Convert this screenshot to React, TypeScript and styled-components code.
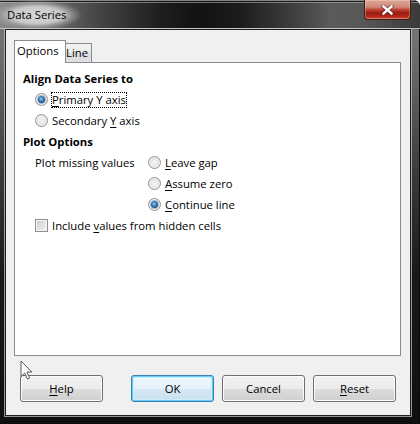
import React from "react";
import styled, { createGlobalStyle } from "styled-components";

const Global = createGlobalStyle`
  html, body { margin: 0; padding: 0; background: #ffffff; }
  body {
    font-family: "Open Sans", "Noto Sans", "Liberation Sans", sans-serif;
    font-size: 11.3px;
    color: #000;
  }
  #root { width: 420px; height: 424px; overflow: hidden; }
`;

const Window = styled.div`
  position: relative;
  width: 420px;
  height: 424px;
  box-sizing: border-box;
  display: flex;
  flex-direction: column;
  overflow: hidden;
  border-top-right-radius: 7px;
  background: linear-gradient(
    to bottom,
    #7c7c7c 0px,
    #686868 70px,
    #3c3c3c 170px,
    #1a1a1a 270px,
    #0f0f0f 100%
  );
  box-shadow: inset -1px 0 0 #0a0a0a, inset 0 -1px 0 #0a0a0a;
`;

const TitleBar = styled.div`
  flex: none;
  height: 29px;
  display: flex;
  justify-content: space-between;
  align-items: flex-start;
  padding-right: 9px;
  background:
    linear-gradient(to bottom, rgba(140, 140, 140, 0.9) 0 1px, rgba(25, 25, 25, 0.9) 1px 2px, rgba(185, 185, 185, 0.55) 2px 3px, transparent 3px),
    linear-gradient(to top, rgba(200, 200, 200, 0.85) 0 1px, transparent 1px),
    linear-gradient(
      to right,
      #8a8a8a 0px,
      #6a6a6a 50px,
      #444444 100px,
      #1e1e1e 160px,
      #121212 200px,
      #1c1c1c 240px,
      #3c3c3c 290px,
      #5a5a5a 330px,
      #585858 362px,
      #3a3a3a 420px
    );
`;

const Title = styled.div`
  height: 29px;
  line-height: 30px;
  padding: 0 16px 0 7px;
  margin-left: -4px;
  padding-left: 11px;
  white-space: nowrap;
  color: #000;
  background: radial-gradient(
    ellipse farthest-side at 48% 52%,
    rgba(214, 214, 214, 1) 0%,
    rgba(206, 206, 206, 0.95) 55%,
    rgba(170, 170, 170, 0.5) 80%,
    rgba(140, 140, 140, 0) 100%
  );
`;

const CloseButton = styled.div`
  width: 47px;
  height: 20px;
  box-sizing: border-box;
  border: 1px solid #3a1c16;
  border-top: none;
  border-radius: 0 0 4px 4px;
  display: flex;
  align-items: center;
  justify-content: center;
  background: linear-gradient(
    to bottom,
    #dca89b 0%,
    #d08576 38%,
    #bf4636 50%,
    #9c1d11 68%,
    #b42a1a 88%,
    #d0503a 100%
  );
  box-shadow: inset 0 0 0 1px rgba(255, 220, 210, 0.35);
`;

const Client = styled.div`
  flex: 1;
  margin: 0 9px 8px 5px;
  background: #f0f0f0;
  border: 1px solid #1c1c1c;
  box-shadow: 0 0 0 1px rgba(205, 205, 205, 0.7);
  display: flex;
  flex-direction: column;
  padding: 10px 9px 13px 8px;
  min-height: 0;
`;

const TabRow = styled.div`
  flex: none;
  height: 22px;
  display: flex;
  align-items: flex-start;
`;

const Tab = styled.div<{ $active?: boolean }>`
  position: relative;
  box-sizing: border-box;
  border: 1px solid #898c95;
  border-bottom: none;
  white-space: nowrap;
  ${(p) =>
    p.$active
      ? `
    z-index: 2;
    width: 52px;
    height: 23px;
    line-height: 20px;
    padding-left: 2px;
    background: #ffffff;
  `
      : `
    z-index: 1;
    width: 27px;
    height: 19px;
    margin-top: 3px;
    margin-left: -1px;
    line-height: 18px;
    padding-left: 0px;
    background: linear-gradient(to bottom, #f3f3f3 0%, #ebebeb 45%, #dddddd 55%, #e0e0e0 100%);
  `}
`;

const Panel = styled.div`
  flex: 1;
  min-height: 0;
  box-sizing: border-box;
  background: #ffffff;
  border: 1px solid #898c95;
  padding: 5px 8px;
  display: flex;
  flex-direction: column;
`;

const Heading = styled.div`
  height: 21px;
  line-height: 21px;
  font-weight: 700;
`;

const OptionRow = styled.div`
  height: 21px;
  display: flex;
  align-items: center;
  margin-left: 12px;
`;

const RadioCircle = styled.span<{ $checked?: boolean }>`
  flex: none;
  width: 13px;
  height: 13px;
  box-sizing: border-box;
  border-radius: 50%;
  border: 1px solid #929292;
  background: radial-gradient(circle at 50% 50%, #f6f6f6 0%, #e6e6e6 50%, #cfcfcf 100%);
  box-shadow: inset 0 0 0 1px rgba(255, 255, 255, 0.55);
  display: flex;
  align-items: center;
  justify-content: center;
  &::after {
    content: "";
    display: ${(p) => (p.$checked ? "block" : "none")};
    width: 7px;
    height: 7px;
    border-radius: 50%;
    background: radial-gradient(circle at 45% 42%, #9fd3ef 0%, #3f86bd 35%, #1c4f85 70%, #12365e 100%);
    box-shadow: 0 0 0 1px rgba(60, 120, 170, 0.4);
  }
`;

const CheckBox = styled.span`
  flex: none;
  width: 13px;
  height: 13px;
  box-sizing: border-box;
  border: 1px solid #8e8f8f;
  background: linear-gradient(135deg, #c4c6c9 0%, #dfe0e1 50%, #f4f4f4 100%);
  box-shadow: inset 0 0 0 1px #f6f6f6;
`;

const Label = styled.span<{ $focused?: boolean }>`
  margin-left: 3px;
  line-height: 14px;
  white-space: nowrap;
  border: 1px dotted ${(p) => (p.$focused ? "#000" : "transparent")};
  u {
    text-decoration-thickness: 1px;
    text-underline-offset: 2px;
  }
`;

const MissingGrid = styled.div`
  display: grid;
  grid-template-columns: 113px auto;
  grid-auto-rows: 21px;
  align-items: center;
  margin-left: 12px;
`;

const GridLabel = styled.span`
  grid-column: 1;
  grid-row: 1;
  white-space: nowrap;
`;

const GridOption = styled.div`
  grid-column: 2;
  display: flex;
  align-items: center;
`;

const ButtonRow = styled.div`
  flex: none;
  margin-top: 19px;
  height: 27px;
  display: flex;
  justify-content: space-between;
  padding: 0 5px 0 6px;
`;

const ButtonGroup = styled.div`
  display: flex;
  gap: 8px;
`;

const Button = styled.div<{ $default?: boolean }>`
  width: 83px;
  height: 27px;
  box-sizing: border-box;
  border-radius: 3px;
  display: flex;
  align-items: center;
  justify-content: center;
  color: #000;
  u {
    text-decoration-thickness: 1px;
    text-underline-offset: 2px;
  }
  ${(p) =>
    p.$default
      ? `
    border: 1px solid #3c7fb1;
    background: linear-gradient(to bottom, #eef7fc 0%, #e6f2fa 50%, #d6e8f4 51%, #c9e0ee 100%);
    box-shadow: inset 0 0 0 1px #5fd0f3, inset 0 0 0 2px #c8eefb;
  `
      : `
    border: 1px solid #707070;
    background: linear-gradient(to bottom, #f2f2f2 0%, #ebebeb 50%, #dddddd 51%, #cfcfcf 100%);
    box-shadow: inset 0 0 0 1px #fbfbfb;
  `}
`;

const Cursor = styled.svg`
  position: absolute;
  left: 20px;
  top: 360px;
  z-index: 5;
  pointer-events: none;
`;

export default function App() {
  return (
    <>
      <Global />
      <Window>
        <TitleBar>
          <Title>Data Series</Title>
          <CloseButton>
            <svg width="13" height="10" viewBox="0 0 13 10">
              <path d="M2.5 1.5 L10.5 8.5 M10.5 1.5 L2.5 8.5" stroke="#3a1410" strokeWidth="4.2" strokeLinecap="square" fill="none" opacity="0.55" />
              <path d="M2.5 1.5 L10.5 8.5 M10.5 1.5 L2.5 8.5" stroke="#ffffff" strokeWidth="2.4" strokeLinecap="square" fill="none" />
            </svg>
          </CloseButton>
        </TitleBar>
        <Client>
          <TabRow>
            <Tab $active>Options</Tab>
            <Tab>Line</Tab>
          </TabRow>
          <Panel>
            <Heading>Align Data Series to</Heading>
            <OptionRow>
              <RadioCircle $checked />
              <Label $focused>
                <u>P</u>rimary Y axis
              </Label>
            </OptionRow>
            <OptionRow>
              <RadioCircle />
              <Label>
                Secondary <u>Y</u> axis
              </Label>
            </OptionRow>
            <Heading>Plot Options</Heading>
            <MissingGrid>
              <GridLabel>Plot missing values</GridLabel>
              <GridOption>
                <RadioCircle />
                <Label>
                  <u>L</u>eave gap
                </Label>
              </GridOption>
              <GridOption>
                <RadioCircle />
                <Label>
                  <u>A</u>ssume zero
                </Label>
              </GridOption>
              <GridOption>
                <RadioCircle $checked />
                <Label>
                  <u>C</u>ontinue line
                </Label>
              </GridOption>
            </MissingGrid>
            <OptionRow>
              <CheckBox />
              <Label>
                Include <u>v</u>alues from hidden cells
              </Label>
            </OptionRow>
          </Panel>
          <ButtonRow>
            <Button>
              <span>
                <u>H</u>elp
              </span>
            </Button>
            <ButtonGroup>
              <Button $default>OK</Button>
              <Button>Cancel</Button>
              <Button>
                <span>
                  <u>R</u>eset
                </span>
              </Button>
            </ButtonGroup>
          </ButtonRow>
        </Client>
        <Cursor width="14" height="21" viewBox="0 0 14 21">
          <path
            d="M1 1 L1 16.5 L4.6 13 L7.4 19 L9.6 18 L6.9 12 L11.8 12 Z"
            fill="#ffffff"
            fillOpacity="0.9"
            stroke="#2a2a2a"
            strokeOpacity="0.75"
            strokeWidth="1"
            strokeLinejoin="miter"
          />
        </Cursor>
      </Window>
    </>
  );
}
